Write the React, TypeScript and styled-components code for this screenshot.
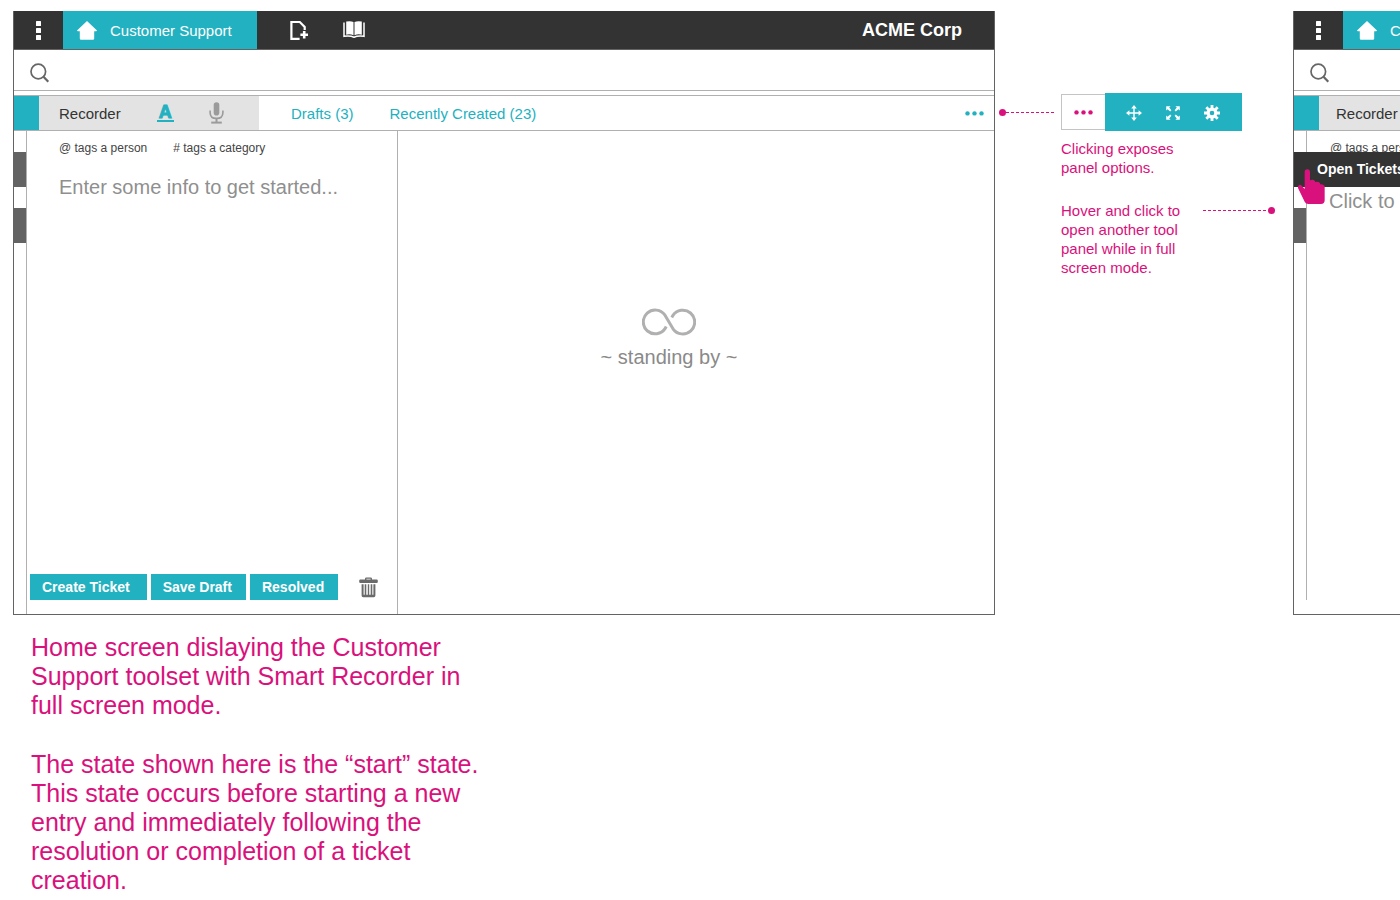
import React from 'react';
import styled, { createGlobalStyle } from 'styled-components';

const teal = '#22b1c0';
const dark = '#333333';
const pink = '#d9117c';
const line = '#b0b0b0';
const frame = '#636363';

const GlobalStyle = createGlobalStyle`
  *, *::before, *::after { box-sizing: border-box; }
  body {
    margin: 0;
    background: #fff;
    font-family: 'Liberation Sans', Arial, sans-serif;
    font-size: 15px;
    line-height: 19px;
    color: ${dark};
    overflow: hidden;
  }
  button {
    font: inherit;
    color: inherit;
    background: none;
    border: 0;
    padding: 0;
    cursor: pointer;
    white-space: nowrap;
  }
  svg { display: block; flex: none; }
  p { margin: 0; }
`;

const Board = styled.main`
  display: grid;
  grid-template-columns: minmax(0, 1fr) 298px 107px;
  align-items: start;
  padding: 11px 0 0 13px;
`;

const Screen = styled.section<{ $cut?: boolean }>`
  position: relative;
  border: 1px solid ${frame};
  border-top: 0;
  border-right-width: ${(p) => (p.$cut ? 0 : 1)}px;
  overflow: hidden;
`;

const AppBar = styled.header`
  display: flex;
  height: 39px;
  background: ${dark};
  border-bottom: 1px solid ${frame};
  color: #fff;
`;

const MenuButton = styled.button`
  flex: none;
  display: grid;
  place-items: center;
  width: 49px;
`;

const HomeTab = styled.button`
  flex: none;
  display: flex;
  align-items: center;
  gap: 13px;
  width: 194px;
  padding-left: 14px;
  background: ${teal};
  color: #fff;
`;

const BarActions = styled.div`
  display: flex;
  align-items: center;
  gap: 34px;
  padding-left: 33px;
`;

const Company = styled.strong`
  margin-left: auto;
  padding-right: 32px;
  font-size: 18px;
  line-height: 38px;
`;

const SearchRow = styled.label`
  display: flex;
  align-items: center;
  gap: 12px;
  height: 41px;
  padding: 6px 16px 0;
  border-bottom: 1px solid ${line};
`;

const SearchInput = styled.input`
  flex: 1;
  min-width: 0;
  border: 0;
  outline: 0;
  font: inherit;
`;

const Toolbar = styled.div`
  display: flex;
  align-items: stretch;
  height: 36px;
  margin-top: 4px;
  border-top: 1px solid ${line};
  border-bottom: 1px solid ${line};
`;

const ActiveMark = styled.div`
  flex: none;
  width: 25px;
  background: ${teal};
`;

const RecorderTab = styled.div<{ $tight?: boolean }>`
  flex: none;
  display: flex;
  align-items: center;
  width: 220px;
  padding-left: ${(p) => (p.$tight ? 17 : 20)}px;
  background: #e3e3e3;
`;

const TextMode = styled.button`
  width: 17px;
  margin-left: 36px;
  border-bottom: 2px solid ${teal};
  color: ${teal};
  font-size: 18px;
  font-weight: bold;
  line-height: 16px;
  -webkit-text-stroke: 1px ${teal};
`;

const VoiceMode = styled.button`
  margin-left: 35px;
`;

const Links = styled.nav`
  display: flex;
  align-items: center;
  gap: 36px;
  padding-left: 32px;
`;

const ToolLink = styled.a`
  color: ${teal};
  text-decoration: none;
  white-space: nowrap;
`;

const MoreButton = styled.button`
  margin-left: auto;
  padding-right: 10px;
`;

const Body = styled.div`
  display: flex;
  min-height: 483px;
`;

const Rail = styled.div<{ $short?: boolean }>`
  flex: none;
  display: flex;
  flex-direction: column;
  gap: 21px;
  width: 13px;
  margin-bottom: ${(p) => (p.$short ? 14 : 0)}px;
  padding-top: 21px;
  border-right: 1px solid ${line};
`;

const RailTab = styled.button`
  height: 35px;
  background: #636363;
`;

const Editor = styled.div`
  flex: none;
  display: flex;
  flex-direction: column;
  width: 371px;
  padding-top: 8px;
  border-right: 1px solid ${line};
`;

const Hints = styled.div<{ $near?: boolean }>`
  display: flex;
  gap: 26px;
  padding-left: ${(p) => (p.$near ? 23 : 32)}px;
  font-size: 12px;
  white-space: nowrap;
  color: #444;
`;

const Entry = styled.textarea`
  flex: 1;
  margin-top: 17px;
  padding: 0 12px 0 32px;
  border: 0;
  outline: 0;
  resize: none;
  font: inherit;
  font-size: 20px;
  line-height: 24px;
  &::placeholder { color: #8f8f8f; opacity: 1; }
`;

const Prompt = styled.p`
  margin-top: 31px;
  padding-left: 22px;
  font-size: 20px;
  line-height: 24px;
  color: #8f8f8f;
`;

const Actions = styled.div`
  display: flex;
  align-items: center;
  gap: 4px;
  padding: 0 0 14px 3px;
`;

const ActionButton = styled.button`
  height: 26px;
  padding: 0 14px 0 12px;
  background: ${teal};
  color: #fff;
  font-size: 14px;
  font-weight: bold;
  &:first-child { padding-right: 17px; }
`;

const TrashButton = styled.button`
  margin-left: 17px;
`;

const Standby = styled.div`
  flex: 1;
  display: flex;
  flex-direction: column;
  align-items: center;
  gap: 9px;
  padding: 177px 54px 0 0;
  font-size: 20px;
  line-height: 24px;
  color: #8a8a8a;
`;

const Flyout = styled.button`
  position: absolute;
  top: 141px;
  left: 0;
  right: 0;
  height: 35px;
  padding-left: 23px;
  background: ${dark};
  color: #fff;
  font-size: 14px;
  font-weight: bold;
  text-align: left;
`;

const Pointer = styled.div`
  position: absolute;
  top: 158px;
  left: 3px;
`;

const Caption = styled.div`
  display: flex;
  flex-direction: column;
  gap: 30px;
  max-width: 483px;
  padding: 18px 0 0 18px;
  color: ${pink};
  font-size: 25px;
  line-height: 29px;
`;

const Notes = styled.aside`
  padding-top: 82px;
  color: ${pink};
`;

const NoteRow = styled.div<{ $gap?: number }>`
  display: flex;
  align-items: flex-start;
  margin-top: ${(p) => p.$gap ?? 0}px;
`;

const Leader = styled.div<{ $end?: boolean }>`
  display: flex;
  flex-direction: ${(p) => (p.$end ? 'row-reverse' : 'row')};
  align-items: center;
  align-self: ${(p) => (p.$end ? 'flex-start' : 'center')};
  width: ${(p) => (p.$end ? 72 : 56)}px;
  height: 19px;
  margin: ${(p) => (p.$end ? '0 0 0 7px' : '0 6px 0 4px')};
`;

const LeaderDot = styled.span`
  width: 7px;
  height: 7px;
  border-radius: 50%;
  background: ${pink};
`;

const LeaderLine = styled.span`
  flex: 1;
  height: 1px;
  background: repeating-linear-gradient(90deg, ${pink} 0 3px, #fff 3px 5px);
`;

const OptionsToggle = styled.button`
  display: grid;
  place-items: center;
  width: 44px;
  height: 36px;
  margin-top: 1px;
  border: 1px solid #c4c4c4;
  border-right: 0;
`;

const Options = styled.div`
  display: flex;
  align-items: center;
  gap: 24px;
  width: 137px;
  height: 38px;
  padding: 2px 0 0 21px;
  background: ${teal};
`;

const Note = styled.p`
  width: 135px;
  margin-left: 66px;
`;

const Kebab = () => (
  <svg width="5" height="19" viewBox="0 0 5 19" fill="#fff">
    <rect width="5" height="5" rx="0.5" />
    <rect y="7" width="5" height="5" rx="0.5" />
    <rect y="14" width="5" height="5" rx="0.5" />
  </svg>
);

const HomeIcon = () => (
  <svg width="20" height="19" viewBox="0 0 20 19" fill="#fff">
    <path d="M10 0 L20 9.6 Q20 10.3 19 10.3 H17.2 V17.4 Q17.2 18.7 16 18.7 H4 Q2.8 18.7 2.8 17.4 V10.3 H1 Q0 10.3 0 9.6 Z" />
  </svg>
);

const NewDocIcon = () => (
  <svg width="19" height="20" viewBox="0 0 19 20" fill="none" stroke="#fff">
    <path d="M9.6 18.8 H1.4 V2 H9.8 L14.7 7 V10" strokeWidth="2.2" />
    <path d="M14.2 11 V18.4 M10.4 14.7 H18" strokeWidth="2.6" />
  </svg>
);

const BookIcon = () => (
  <svg width="22" height="18" viewBox="0 0 22 18">
    <path d="M3.2 0.6 Q7.4 -0.4 10.5 1 V14.2 Q7 12.8 3.2 13.7 Z M18.8 0.6 Q14.6 -0.4 11.5 1 V14.2 Q15 12.8 18.8 13.7 Z" fill="#fff" />
    <path d="M1 1.6 V15.3 Q7.5 14.6 11 16.2 Q14.5 14.6 21 15.3 V1.6" fill="none" stroke="#fff" strokeWidth="1.5" />
  </svg>
);

const SearchIcon = () => (
  <svg width="20" height="20" viewBox="0 0 20 20" fill="none" stroke="#666">
    <circle cx="8.3" cy="8.5" r="7.3" strokeWidth="1.7" />
    <path d="M13.5 13.8 L18.3 18.8" strokeWidth="2.2" />
  </svg>
);

const MicIcon = () => (
  <svg width="15" height="22" viewBox="0 0 15 22" fill="none" stroke="#9b9b9b">
    <rect x="4.7" y="0.3" width="5.6" height="13.2" rx="2.8" fill="#9b9b9b" stroke="none" />
    <path d="M1.1 8.4 V10.4 Q1.1 16.4 7.5 16.4 Q13.9 16.4 13.9 10.4 V8.4" strokeWidth="1.6" />
    <path d="M7.5 16 V20" strokeWidth="2" />
    <path d="M2.2 20.6 H12.8" strokeWidth="2" />
  </svg>
);

const Dots = ({ color }: { color: string }) => (
  <svg width="19" height="6" viewBox="0 0 19 6" fill={color}>
    <circle cx="2.5" cy="3.4" r="2.2" />
    <circle cx="9.5" cy="3.4" r="2.2" />
    <circle cx="16.5" cy="3.4" r="2.2" />
  </svg>
);

const InfinityIcon = () => (
  <svg width="54" height="28" viewBox="0 0 54 28" fill="none" stroke="#b0b0b0" strokeWidth="3">
    <path d="M24.2 18.6 L23.2 20.4 A11.9 11.9 0 1 1 23 7.2 L31 20.8 A11.9 11.9 0 1 0 30.8 7.6 L29.8 9.4" />
  </svg>
);

const TrashIcon = () => (
  <svg width="19" height="21" viewBox="0 0 19 21" fill="#6a6a6a">
    <path d="M6 3 V1.8 Q6 0.4 7.4 0.4 H11.6 Q13 0.4 13 1.8 V3 H11.6 V1.7 H7.4 V3 Z" />
    <rect x="0.2" y="2.6" width="18.6" height="3.4" rx="1.2" />
    <path d="M2.6 7.2 H4.6 V17.8 H5.7 V7.2 H7.3 V17.8 H8.8 V7.2 H10.2 V17.8 H11.7 V7.2 H13.3 V17.8 H14.4 V7.2 H16.4 V18.6 Q16.4 20.2 14.8 20.2 H4.2 Q2.6 20.2 2.6 18.6 Z" />
  </svg>
);

const MoveIcon = () => (
  <svg width="16" height="16" viewBox="0 0 16 16" fill="#fff">
    <path d="M7.3 2.8 H8.7 V7.3 H13.2 V8.7 H8.7 V13.2 H7.3 V8.7 H2.8 V7.3 H7.3 Z" />
    <path d="M8 0 L10.8 3.4 H5.2 Z M8 16 L5.2 12.6 H10.8 Z M0 8 L3.4 5.2 V10.8 Z M16 8 L12.6 10.8 V5.2 Z" />
  </svg>
);

const ExpandIcon = () => (
  <svg width="14" height="14" viewBox="0 0 14 14" fill="#fff">
    <path d="M0.2 0.2 H4.6 L3.2 1.6 L5.4 4.2 L4.2 5.4 L1.6 3.2 L0.2 4.6 Z" />
    <path d="M13.8 0.2 V4.6 L12.4 3.2 L9.8 5.4 L8.6 4.2 L10.8 1.6 L9.4 0.2 Z" />
    <path d="M13.8 13.8 H9.4 L10.8 12.4 L8.6 9.8 L9.8 8.6 L12.4 10.8 L13.8 9.4 Z" />
    <path d="M0.2 13.8 V9.4 L1.6 10.8 L4.2 8.6 L5.4 9.8 L3.2 12.4 L4.6 13.8 Z" />
  </svg>
);

const GearIcon = () => (
  <svg width="16" height="16" viewBox="0 0 16 16" fill="none" stroke="#fff">
    <circle cx="8" cy="8" r="3.9" strokeWidth="3.2" />
    <path
      d="M8 0 V3 M8 13 V16 M0 8 H3 M13 8 H16 M2.3 2.3 L4.5 4.5 M11.5 11.5 L13.7 13.7 M13.7 2.3 L11.5 4.5 M4.5 11.5 L2.3 13.7"
      strokeWidth="2.8"
    />
  </svg>
);

const HandIcon = () => (
  <svg width="29" height="36" viewBox="0 0 87 108" fill={pink}>
    <path d="M23 9 Q23 1 31 1 Q39 1 39 9 V34 Q47 30 54 36 V39 Q63 36 69 42 V46 Q78 44 83 51 V94 Q83 105 72 105 H34 Q26 105 23 98 L3 57 Q1 51 6 48 Q11 46 15 51 L23 60 Z" />
  </svg>
);

const TopRows = ({ children }: { children?: React.ReactNode }) => (
  <>
    <AppBar>
      <MenuButton aria-label="Menu"><Kebab /></MenuButton>
      <HomeTab><HomeIcon />Customer Support</HomeTab>
      {children}
    </AppBar>
    <SearchRow>
      <SearchIcon />
      <SearchInput type="text" aria-label="Search" />
    </SearchRow>
  </>
);

export default function App() {
  return (
    <>
      <GlobalStyle />
      <Board>
        <div>
          <Screen>
            <TopRows>
              <BarActions>
                <button aria-label="New document"><NewDocIcon /></button>
                <button aria-label="Library"><BookIcon /></button>
              </BarActions>
              <Company>ACME Corp</Company>
            </TopRows>
            <Toolbar>
              <ActiveMark />
              <RecorderTab>
                <span>Recorder</span>
                <TextMode aria-label="Text entry">A</TextMode>
                <VoiceMode aria-label="Voice entry"><MicIcon /></VoiceMode>
              </RecorderTab>
              <Links>
                <ToolLink href="#drafts">Drafts (3)</ToolLink>
                <ToolLink href="#recent">Recently Created (23)</ToolLink>
              </Links>
              <MoreButton aria-label="Panel options"><Dots color={teal} /></MoreButton>
            </Toolbar>
            <Body>
              <Rail>
                <RailTab aria-label="Open Tickets" />
                <RailTab aria-label="Tool panel" />
              </Rail>
              <Editor>
                <Hints>
                  <span>@ tags a person</span>
                  <span># tags a category</span>
                </Hints>
                <Entry aria-label="Entry" placeholder="Enter some info to get started..." />
                <Actions>
                  <ActionButton>Create Ticket</ActionButton>
                  <ActionButton>Save Draft</ActionButton>
                  <ActionButton>Resolved</ActionButton>
                  <TrashButton aria-label="Delete"><TrashIcon /></TrashButton>
                </Actions>
              </Editor>
              <Standby>
                <InfinityIcon />
                <span>~ standing by ~</span>
              </Standby>
            </Body>
          </Screen>
          <Caption>
            <p>
              Home screen dislaying the Customer Support toolset with Smart
              Recorder in full screen mode.
            </p>
            <p>
              The state shown here is the “start” state. This state occurs
              before starting a new entry and immediately following the
              resolution or completion of a ticket creation.
            </p>
          </Caption>
        </div>

        <Notes>
          <NoteRow>
            <Leader><LeaderDot /><LeaderLine /></Leader>
            <OptionsToggle aria-label="Panel options"><Dots color={pink} /></OptionsToggle>
            <Options>
              <button aria-label="Move"><MoveIcon /></button>
              <button aria-label="Full screen"><ExpandIcon /></button>
              <button aria-label="Settings"><GearIcon /></button>
            </Options>
          </NoteRow>
          <NoteRow $gap={8}>
            <Note>Clicking exposes panel options.</Note>
          </NoteRow>
          <NoteRow $gap={24}>
            <Note>Hover and click to open another tool panel while in full screen mode.</Note>
            <Leader $end><LeaderDot /><LeaderLine /></Leader>
          </NoteRow>
        </Notes>

        <Screen $cut>
          <TopRows />
          <Toolbar>
            <ActiveMark />
            <RecorderTab $tight>Recorder</RecorderTab>
          </Toolbar>
          <Body>
            <Rail $short>
              <RailTab aria-label="Open Tickets" />
              <RailTab aria-label="Tool panel" />
            </Rail>
            <Editor>
              <Hints $near><span>@ tags a person</span></Hints>
              <Prompt>Click to</Prompt>
            </Editor>
          </Body>
          <Flyout>Open Tickets</Flyout>
          <Pointer><HandIcon /></Pointer>
        </Screen>
      </Board>
    </>
  );
}
